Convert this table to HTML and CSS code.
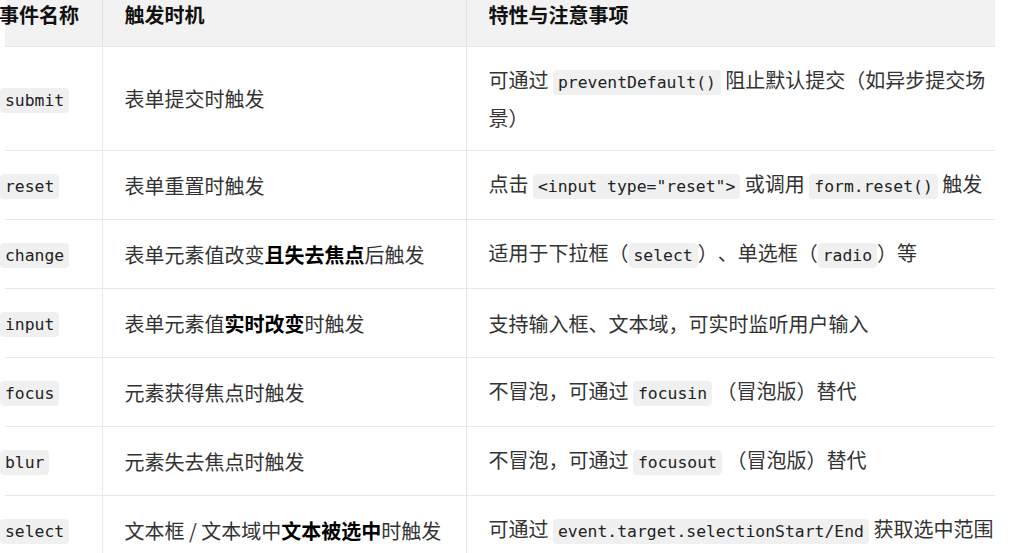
FILE: index.html
```html
<!DOCTYPE html>
<html lang="zh-CN">
<head>
<meta charset="utf-8">
<title>表单事件</title>
<link rel="stylesheet" href="styles.css">
</head>
<body>
<table class="events">
  <colgroup>
    <col class="c-name">
    <col class="c-when">
    <col class="c-note">
  </colgroup>
  <thead>
    <tr>
      <th class="name">事件名称</th>
      <th>触发时机</th>
      <th class="note">特性与注意事项</th>
    </tr>
  </thead>
  <tbody>
    <tr>
      <td class="name"><code>submit</code></td>
      <td>表单提交时触发</td>
      <td class="note">可通过 <code>preventDefault()</code> 阻止默认提交（如异步提交场景）</td>
    </tr>
    <tr>
      <td class="name"><code>reset</code></td>
      <td>表单重置时触发</td>
      <td class="note">点击 <code>&lt;input type="reset"&gt;</code> 或调用 <code>form.reset()</code> 触发</td>
    </tr>
    <tr>
      <td class="name"><code>change</code></td>
      <td>表单元素值改变<strong>且失去焦点</strong>后触发</td>
      <td class="note">适用于下拉框（<code>select</code>）、单选框（<code>radio</code>）等</td>
    </tr>
    <tr>
      <td class="name"><code>input</code></td>
      <td>表单元素值<strong>实时改变</strong>时触发</td>
      <td class="note">支持输入框、文本域，可实时监听用户输入</td>
    </tr>
    <tr>
      <td class="name"><code>focus</code></td>
      <td>元素获得焦点时触发</td>
      <td class="note">不冒泡，可通过 <code>focusin</code> （冒泡版）替代</td>
    </tr>
    <tr>
      <td class="name"><code>blur</code></td>
      <td>元素失去焦点时触发</td>
      <td class="note">不冒泡，可通过 <code>focusout</code> （冒泡版）替代</td>
    </tr>
    <tr>
      <td class="name"><code>select</code></td>
      <td>文本框 / 文本域中<strong>文本被选中</strong>时触发</td>
      <td class="note nowrap">可通过 <code>event.target.selectionStart/End</code> 获取选中范围</td>
    </tr>
  </tbody>
</table>
</body>
</html>
```

FILE: styles.css
```css
html, body {
  margin: 0;
  padding: 0;
  background: #ffffff;
}

body {
  font-family: "Noto Sans CJK SC", "Noto Sans", sans-serif;
  font-size: 20px;
  color: #333333;
  overflow: hidden;
  text-spacing-trim: space-all;
}

.events {
  border-collapse: collapse;
  table-layout: fixed;
  width: 990px;
  margin-left: 5px;
}

.c-name { width: 97px; }
.c-when { width: 364px; }
.c-note { width: 529px; }

.events th {
  background: #f2f2f2;
  color: #111111;
  font-weight: 700;
  text-align: left;
  line-height: 30px;
  height: 46px;
  box-sizing: border-box;
  padding: 0 22px 16px;
  vertical-align: top;
  border-bottom: 1px solid #e8e8e8;
  border-left: 1px solid #e3e3e3;
}

.events td {
  line-height: 35px;
  padding: 15px 22px 15px;
  vertical-align: middle;
  border-bottom: 1px solid #e8e8e8;
  border-left: 1px solid #e8e8e8;
}

.events th.name,
.events td.name {
  border-left: none;
  padding-left: 0;
  padding-right: 0;
}

.events th.name {
  text-indent: -6px;
  white-space: nowrap;
}

.events th.note,
.events td.note {
  padding-right: 0;
}

.nowrap {
  white-space: nowrap;
}

.events strong {
  font-weight: 700;
  color: #000000;
}

code {
  font-family: "DejaVu Sans Mono", "Liberation Mono", monospace;
  font-size: 16.4px;
  color: #222222;
  background: #f0f0f0;
  border-radius: 4px;
  padding: 3px 5px;
}

td.name code {
  margin-left: -5px;
}
```
